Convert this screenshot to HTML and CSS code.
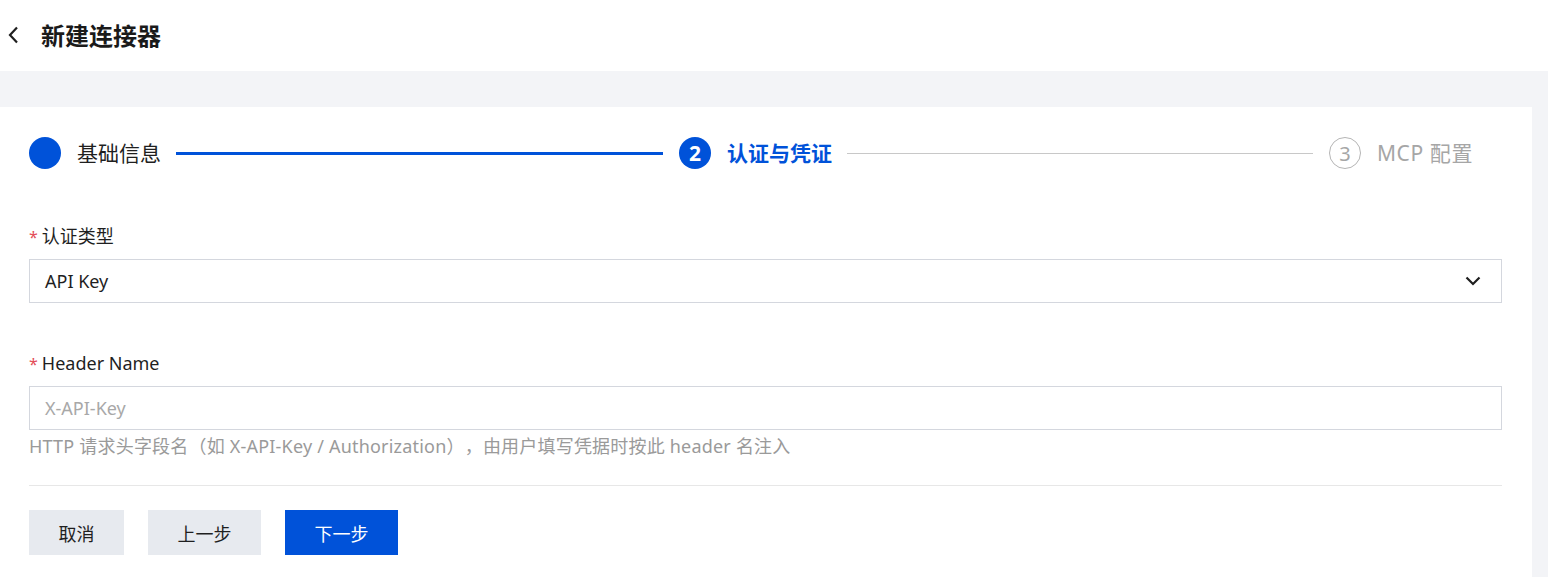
FILE: index.html
```html
<!DOCTYPE html>
<html lang="zh-CN">
<head>
<meta charset="utf-8">
<title>新建连接器</title>
<link rel="stylesheet" href="styles.css">
</head>
<body>
<header class="topbar">
  <svg class="back" width="12" height="18" viewBox="0 0 12 18"><polyline points="10,1.5 3,9 10,16.5" fill="none" stroke="#1f1f1f" stroke-width="2.2"/></svg>
  <h1 class="title">新建连接器</h1>
</header>
<main class="main">
  <section class="card">
    <div class="steps">
      <div class="step done">
        <span class="dot"></span>
        <span class="step-title">基础信息</span>
        <span class="line line-active"></span>
      </div>
      <div class="step current">
        <span class="dot">2</span>
        <span class="step-title">认证与凭证</span>
        <span class="line"></span>
      </div>
      <div class="step todo last">
        <span class="dot">3</span>
        <span class="step-title">MCP 配置</span>
      </div>
    </div>

    <div class="field field-first">
      <label class="label"><span class="req">*</span>认证类型</label>
      <div class="control select">
        <span>API Key</span>
        <svg class="chev" width="16" height="10" viewBox="0 0 16 10"><polyline points="1.5,1.5 8,8 14.5,1.5" fill="none" stroke="#1f1f1f" stroke-width="2.2"/></svg>
      </div>
    </div>

    <div class="field">
      <label class="label"><span class="req">*</span>Header Name</label>
      <div class="control input"><span class="ph">X-API-Key</span></div>
      <div class="help">HTTP 请求头字段名（如 X-API-Key / Authorization），由用户填写凭据时按此 header 名注入</div>
    </div>

    <div class="divider"></div>

    <div class="actions">
      <button class="btn btn-grey btn-cancel">取消</button>
      <button class="btn btn-grey">上一步</button>
      <button class="btn btn-primary">下一步</button>
    </div>
  </section>
</main>
</body>
</html>
```

FILE: styles.css
```css
* { box-sizing: border-box; }
html, body { margin: 0; padding: 0; }
body {
  font-family: "Noto Sans", "Noto Sans CJK SC", sans-serif;
  color: #1f1f1f;
  background: #f3f4f7;
  height: 577px;
  overflow: hidden;
  text-spacing-trim: space-all;
}
.topbar {
  height: 71px;
  background: #fff;
  display: flex;
  align-items: center;
  padding-left: 7px;
  padding-bottom: 2px;
}
.back { display: block; }
.title {
  margin: 0 0 0 22px;
  font-size: 24px;
  font-weight: 700;
  color: #1a1a1a;
}
.main {
  padding: 36px 16px 0 0;
}
.card {
  background: #fff;
  padding: 30px 30px 40px 29px;
  min-height: 480px;
}
.steps {
  display: flex;
  align-items: center;
  padding-right: 29px;
}
.step {
  flex: 1;
  display: flex;
  align-items: center;
}
.step.last { flex: none; }
.dot {
  width: 32px;
  height: 32px;
  border-radius: 50%;
  display: flex;
  align-items: center;
  justify-content: center;
  font-size: 21px;
  flex: none;
}
.step-title {
  margin-left: 16px;
  font-size: 21px;
  line-height: 32px;
  white-space: nowrap;
}
.line {
  flex: 1;
  height: 1px;
  background: #c8c8c8;
  margin: 0 16px 0 15px;
}
.line-active { height: 3px; background: #0052d9; }
.done .dot { background: #0052d9; }
.done .step-title { color: #1f1f1f; }
.current .dot { background: #0052d9; color: #fff; font-weight: 700; }
.current .step-title { color: #0052d9; font-weight: 700; }
.todo .dot { border: 1px solid #b5b5b5; color: #a6a6a6; font-size: 20px; }
.todo .step-title { color: #a6a6a6; letter-spacing: 0.6px; }

.field { margin-top: 47px; }
.field.field-first { margin-top: 54px; }
.label {
  display: block;
  font-size: 18px;
  line-height: 26px;
  margin-bottom: 9px;
  color: #1f1f1f;
}
.req { color: #e34d59; margin-right: 4px; font-size: 16px; }
.control {
  height: 44px;
  border: 1px solid #d4d7de;
  display: flex;
  align-items: center;
  padding: 0 20px 0 15px;
  font-size: 18px;
}
.select { justify-content: space-between; }
.chev { display: block; }
.ph { color: #a8a8a8; }
.help {
  font-size: 18px;
  line-height: 32px;
  color: #9a9a9a;
  letter-spacing: 0.2px;
}
.divider {
  height: 1px;
  background: #e7e7e7;
  margin-top: 23px;
}
.actions {
  display: flex;
  gap: 24px;
  margin-top: 24px;
}
.btn {
  height: 45px;
  width: 113px;
  border: none;
  font-family: inherit;
  font-size: 18px;
  padding: 0;
  cursor: pointer;
}
.btn-cancel { width: 95px; }
.btn-grey { background: #e7eaef; color: #1f1f1f; }
.btn-primary { background: #0052d9; color: #fff; }
```
